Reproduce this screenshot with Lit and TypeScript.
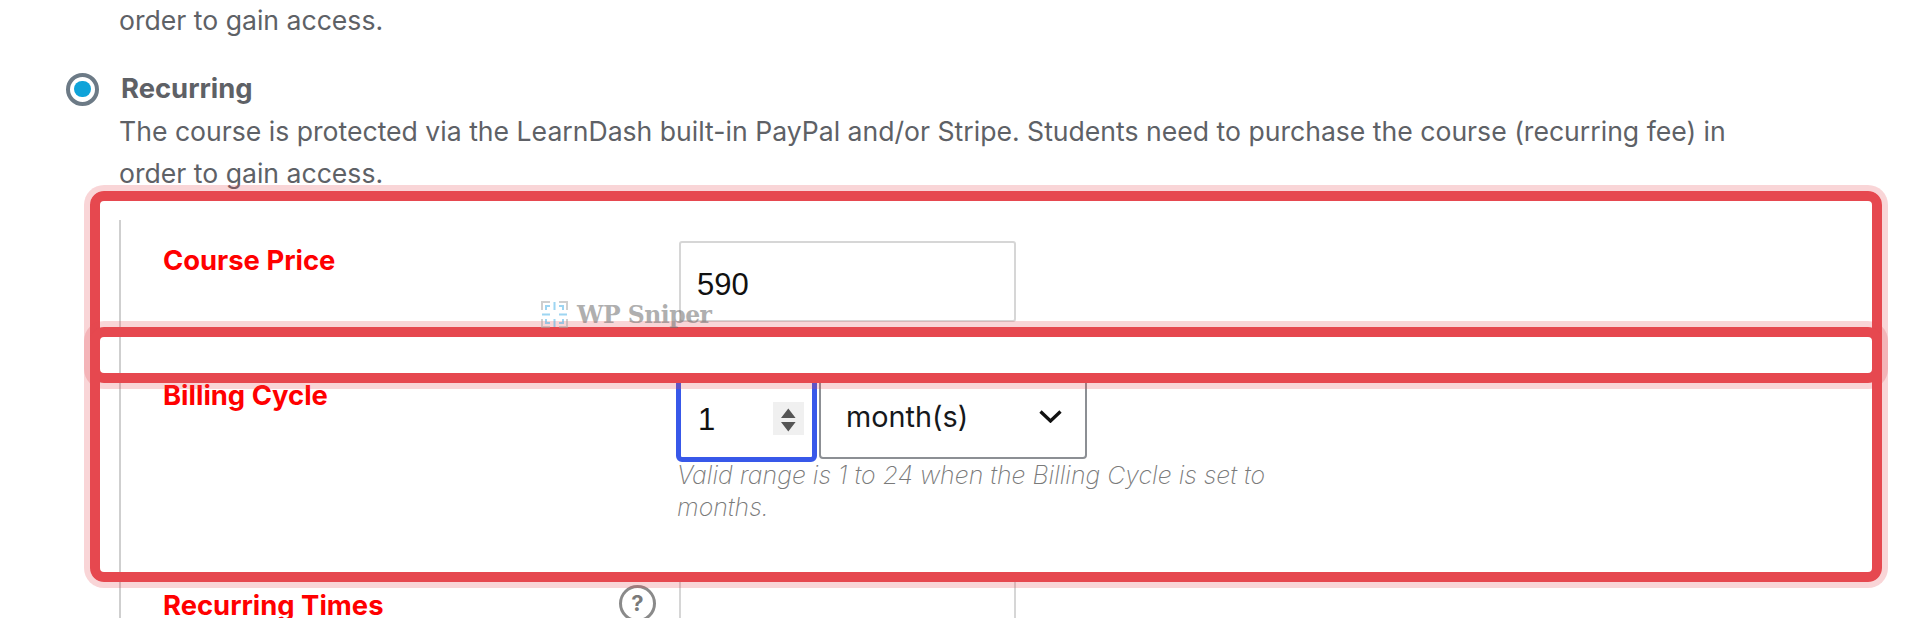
import { LitElement, html, css } from "lit";
import { customElement } from "lit/decorators.js";

@customElement("app-root")
export class AppRoot extends LitElement {
  static styles = css`
    :host { display: block; width: 1920px; height: 618px; background: #fff; }
    .page {
      position: relative; width: 1920px; height: 618px; overflow: hidden;
      box-sizing: border-box; padding-left: 66px; background: #fff;
      font-family: Inter, "Liberation Sans", sans-serif;
    }
    .desc { margin: 0; font-size: 26.6px; line-height: 42px; color: #5e6166; width: 1640px; }
    .option { display: grid; grid-template-columns: 33px 1fr; column-gap: 20px; }
    .lead { margin-top: -1px; margin-bottom: 27px; }
    .radio {
      width: 33px; height: 33px; box-sizing: border-box; border-radius: 50%;
      border: 4px solid #6c7a86; display: flex; align-items: center; justify-content: center;
      align-self: center; background: #fff;
    }
    .dot { width: 16.5px; height: 16.5px; border-radius: 50%; background: #0fa3d9; }
    .title { font-size: 27.4px; font-weight: 700; line-height: 40px; padding-bottom: 2px; color: #5e6166; padding-left: 2px; }
    .nested {
      margin-top: 26px; border-left: 2px solid #cfcfcf; padding: 20px 0 0 42px;
      display: grid; grid-template-columns: 516px 1fr; row-gap: 51px;
    }
    .label { font-size: 27.4px; font-weight: 700; line-height: 40px; color: #f00; }
    .mt2 { margin-top: 2px; }
    .label-row { display: flex; justify-content: space-between; align-items: flex-start; padding-right: 23px; }
    .label-row .label { margin-top: 11px; }
    .help-icon { display: block; margin-top: 11px; }
    .field {
      display: block; width: 337px; height: 81px; box-sizing: border-box; padding: 6px 16px 0;
      border: 2px solid #d6d6d6; border-radius: 3px; background: #fff; outline: none;
      font: 400 31px "Liberation Sans", sans-serif; color: #111;
    }
    .first { margin-top: 1px; }
    .cycle { display: flex; gap: 2px; margin-left: -3px; }
    .stepper {
      width: 141px; height: 89px; box-sizing: border-box; border: 5px solid #3858e9; border-radius: 6px;
      display: flex; align-items: center; justify-content: space-between; padding: 4px 8px 0 17px;
      font: 400 31px "Liberation Sans", sans-serif; color: #111; background: #fff;
    }
    .spin { width: 31px; height: 33px; background: #f0f0f0; display: block; margin-top: -3px; }
    .select {
      width: 268px; height: 86px; box-sizing: border-box; border: 2px solid #8c8f94; border-radius: 4px;
      display: flex; align-items: center; justify-content: space-between; padding: 0 23px 0 25px;
      font-size: 28.8px; color: #16181b; background: #fff;
    }
    .hint {
      margin: -3px 0 0 -2px; width: 610px; font-size: 24.9px; font-weight: 200; font-style: italic;
      line-height: 32px; color: #7a7a7a;
    }
    .hl {
      position: absolute; left: 90px; width: 1792px; box-sizing: border-box;
      border: 10px solid #e6484f; border-radius: 14px; box-shadow: 0 0 0 6px rgba(231, 74, 80, 0.23);
    }
    .hl-a { top: 191px; height: 192px; }
    .hl-b { top: 327px; height: 255px; }
    .mark { position: absolute; left: 541px; top: 301px; display: flex; align-items: flex-start; gap: 9px; opacity: 0.55; }
    .mark-text { margin-top: 1px; font: 700 23.5px/27px "DejaVu Serif", serif; color: #6f6f6f; letter-spacing: -0.5px; }
  `;

  render() {
    return html`
      <div class="page">
        <div class="option lead"><span></span><p class="desc">order to gain access.</p></div>
        <div class="option">
          <div class="radio"><div class="dot"></div></div>
          <div class="title">Recurring</div>
          <span></span>
          <div>
            <p class="desc">The course is protected via the LearnDash built-in PayPal and/or Stripe. Students need to purchase the course (recurring fee) in order to gain access.</p>
            <div class="nested">
              <div class="label">Course Price</div>
              <input class="field first" .value=${"590"} />
              <div class="label mt2">Billing Cycle</div>
              <div>
                <div class="cycle">
                  <div class="stepper">
                    <span>1</span>
                    <svg class="spin" viewBox="0 0 31 33">
                      <path d="M8 16h14.6L15.3 6.5z M8 20h14.6L15.3 29.5z" fill="#555"></path>
                    </svg>
                  </div>
                  <div class="select">
                    <span>month(s)</span>
                    <svg width="23" height="13" viewBox="0 0 23 13">
                      <path d="M1.5 1.5L11.5 11l10-9.5" fill="none" stroke="#111" stroke-width="3.3"></path>
                    </svg>
                  </div>
                </div>
                <p class="hint">Valid range is 1 to 24 when the Billing Cycle is set to months.</p>
              </div>
              <div class="label-row">
                <div class="label">Recurring Times</div>
                <svg class="help-icon" width="37" height="37" viewBox="0 0 37 37">
                  <circle cx="18.5" cy="18.5" r="17" fill="none" stroke="#8a8a8a" stroke-width="3"></circle>
                  <text x="18.5" y="26" text-anchor="middle" font-family="Inter, sans-serif" font-weight="700" font-size="22" fill="#7a7a7a">?</text>
                </svg>
              </div>
              <input class="field" />
            </div>
          </div>
        </div>
        <div class="hl hl-a"></div>
        <div class="hl hl-b"></div>
        <div class="mark">
          <svg width="27" height="27" viewBox="0 0 27 27">
            <path d="M1 9V1h8M18 1h8v8M26 18v8h-8M9 26H1v-8" fill="none" stroke="#a9a9a9" stroke-width="2"></path>
            <path d="M13.5 1v8M13.5 18v8M1 13.5h8M18 13.5h8M5 9V5h4M18 5h4v4M22 18v4h-4M9 22H5v-4" fill="none" stroke="#4fb4e8" stroke-width="2"></path>
          </svg>
          <span class="mark-text">WP Sniper</span>
        </div>
      </div>
    `;
  }
}
